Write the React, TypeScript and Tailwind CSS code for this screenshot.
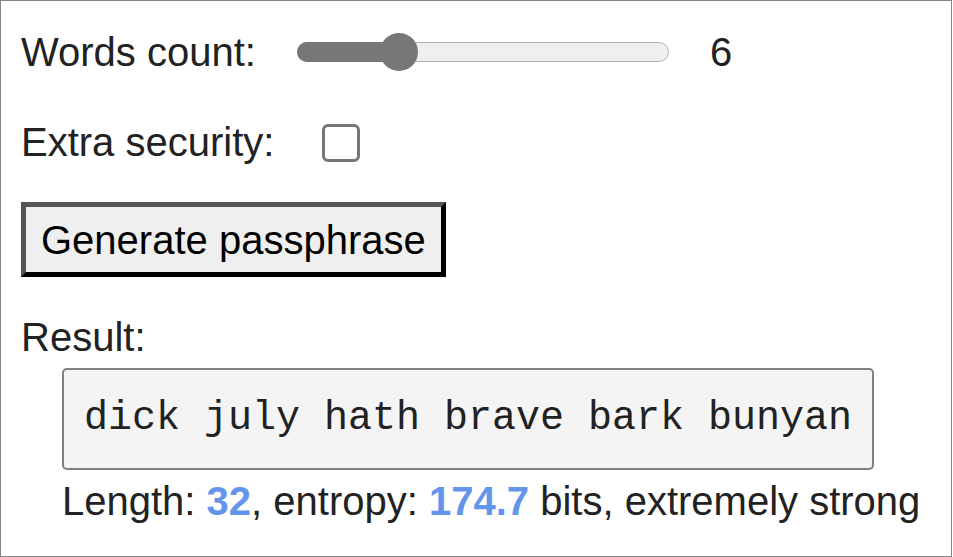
export default function App() {
  const count = 6;
  const phrase = "dick july hath brave bark bunyan";

  return (
    <div
      className="box-border h-[557px] w-[952px] border border-[#858585] bg-white px-[20px] pt-[21px] text-[40px] text-[#222]"
      style={{ fontFamily: '"Liberation Sans", Arial, sans-serif' }}
    >
      <div className="flex h-[60px] items-center">
        <span>Words count:</span>
        <div className="relative ml-[41px] flex h-[38px] w-[372px] items-center">
          <div className="h-[20px] w-full rounded-full border-[1.5px] border-[#b2b2b2] bg-[#efefef]" />
          <div className="absolute left-0 top-[9px] h-[20px] w-[104px] rounded-full bg-[#777]" />
          <div className="absolute left-[83px] top-0 h-[38px] w-[38px] rounded-full bg-[#777]" />
        </div>
        <span className="ml-[41px]">{count}</span>
      </div>

      <div className="mt-[30px] flex h-[60px] items-center">
        <span>Extra security:</span>
        <span className="ml-[48px] mt-[1px] box-border block h-[38px] w-[38px] rounded-[6px] border-[3px] border-[#767676] bg-white" />
      </div>

      <button className="mt-[30px] box-border flex h-[75px] items-center border-[5px] border-b-black border-l-[#555] border-r-black border-t-[#555] bg-[#efefef] px-[15px] text-[40px] text-black">
        Generate passphrase
      </button>

      <div className="mt-[37px] leading-[46px]">Result:</div>

      <div
        className="ml-[41px] mt-[8px] box-border inline-flex h-[102px] items-center rounded-[5px] border-2 border-[#808080] bg-[#f4f4f4] px-[20px] text-[40px] text-[#222] whitespace-pre"
        style={{ fontFamily: '"Liberation Mono", "Courier New", monospace' }}
      >
        {phrase}
      </div>

      <div className="ml-[41px] mt-[8px] leading-[46px]">
        Length: <b className="text-[#6495ed]">32</b>, entropy:{" "}
        <b className="text-[#6495ed]">174.7</b> bits, extremely strong
      </div>
    </div>
  );
}
